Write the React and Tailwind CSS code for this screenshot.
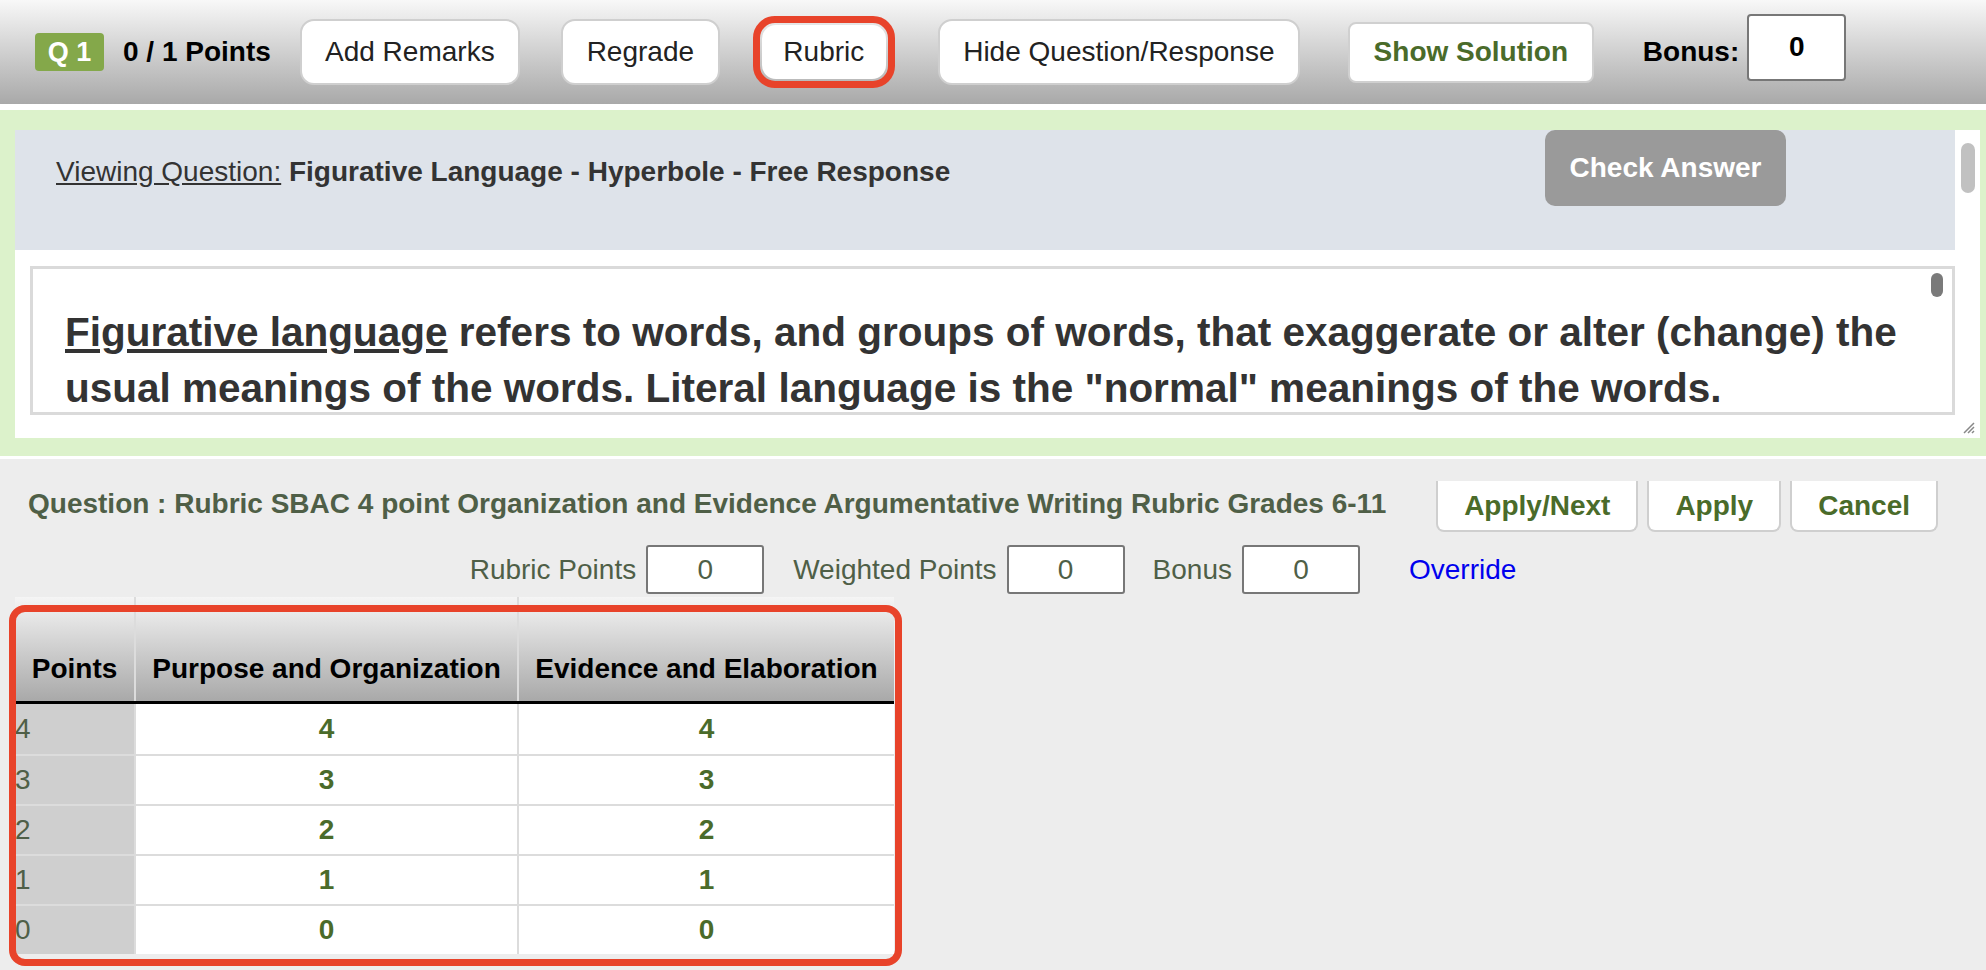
import React from "react";

const TopButton = ({ children, className = "" }) => (
  <button
    className={`h-[66px] bg-white border-2 border-[#cfcfcf] rounded-[14px] text-[28px] text-[#222] ${className}`}
  >
    {children}
  </button>
);

const rows = [4, 3, 2, 1, 0];

const App = () => {
  return (
    <div className="w-[1986px] h-[970px] overflow-hidden bg-[#ededed] font-['Liberation_Sans',Arial,sans-serif]">
      {/* top bar */}
      <div className="h-[104px] bg-gradient-to-b from-[#f8f8f8] to-[#a9a9a9] flex items-center pl-[35px]">
        <div className="w-[69px] h-[38px] bg-[#84a84a] rounded-[4px] flex items-center justify-center text-white font-bold text-[27px]">
          Q 1
        </div>
        <span className="ml-[19px] font-bold text-[28px] text-black">0 / 1 Points</span>
        <TopButton className="ml-[29px] w-[220px]">Add Remarks</TopButton>
        <TopButton className="ml-[41px] w-[159px]">Regrade</TopButton>
        <div className="ml-[33px] border-[7px] border-[#e8432a] rounded-[22px] p-[2px]">
          <button className="h-[54px] w-[124px] bg-white rounded-[14px] text-[28px] text-[#222]">
            Rubric
          </button>
        </div>
        <TopButton className="ml-[43px] w-[362px]">Hide Question/Response</TopButton>
        <button className="ml-[48px] w-[246px] h-[61px] bg-white border-2 border-[#d0d0d0] rounded-[8px] text-[28px] font-bold text-[#4a6b2a]">
          Show Solution
        </button>
        <span className="ml-[49px] font-bold text-[28px] text-black">Bonus:</span>
        <div className="ml-[8px] mb-[10px] w-[99px] h-[67px] bg-white border-2 border-[#777] rounded-[4px] flex items-center justify-center font-bold text-[28px] text-black">
          0
        </div>
      </div>

      <div className="h-[6px] bg-white" />

      {/* question area */}
      <div className="bg-[#dcf2cb] pt-[20px] pb-[18px] pl-[15px] pr-[6px]">
        <div className="h-[308px] bg-white flex">
          <div className="flex-1 flex flex-col">
            <div className="h-[120px] bg-[#dee3ea] flex justify-between items-start">
              <div className="pl-[41px] pt-[21px] text-[28px] text-[#333]">
                <span className="underline">Viewing Question:</span>{" "}
                <span className="font-bold">Figurative Language - Hyperbole - Free Response</span>
              </div>
              <button className="mr-[169px] w-[241px] h-[76px] bg-[#9a9a9a] rounded-[10px] text-white font-bold text-[28px]">
                Check Answer
              </button>
            </div>
            <div className="pt-[16px] pl-[15px]">
              <div className="relative h-[149px] border-[3px] border-[#dadada] overflow-hidden px-[32px] pt-[35px] text-[40.5px] leading-[56px] font-bold text-[#333]">
                <span className="underline">Figurative language</span> refers to words, and groups of words,
                that exaggerate or alter (change) the usual meanings of the words. Literal language is the
                "normal" meanings of the words.
                <div className="absolute right-[9px] top-[4px] w-[12px] h-[24px] rounded-full bg-[#7a7a7a]" />
              </div>
            </div>
          </div>
          <div className="w-[25px] flex flex-col items-center justify-between pt-[13px] pb-[4px]">
            <div className="w-[14px] h-[50px] rounded-full bg-[#c1c1c1]" />
            <svg width="14" height="14" viewBox="0 0 14 14">
              <path d="M13 3 L3 13 M13 7 L7 13 M13 11 L11 13" stroke="#888" strokeWidth="1.5" />
            </svg>
          </div>
        </div>
      </div>

      <div className="h-[3px] bg-white" />

      {/* rubric section */}
      <div className="flex items-center justify-between mt-[22px] pl-[28px] pr-[48px]">
        <span className="text-[28px] font-bold text-[#4f5f47] -mt-[6px]">
          Question : Rubric SBAC 4 point Organization and Evidence Argumentative Writing Rubric Grades 6-11
        </span>
        <div className="flex gap-[9px]">
          {["Apply/Next", "Apply", "Cancel"].map((b) => (
            <button
              key={b}
              className="h-[51px] px-[26px] bg-white border-2 border-t-0 border-[#cfcfcf] rounded-b-[8px] text-[28px] font-bold text-[#4a6b2a]"
            >
              {b}
            </button>
          ))}
        </div>
      </div>

      <div className="mt-[13px] flex items-center justify-center text-[28px] text-[#4f5f47]">
        <span>Rubric Points</span>
        <div className="ml-[10px] w-[118px] h-[49px] bg-white border-2 border-[#777] rounded-[3px] flex items-center justify-center">0</div>
        <span className="ml-[29px]">Weighted Points</span>
        <div className="ml-[10px] w-[118px] h-[49px] bg-white border-2 border-[#777] rounded-[3px] flex items-center justify-center">0</div>
        <span className="ml-[28px]">Bonus</span>
        <div className="ml-[10px] w-[118px] h-[49px] bg-white border-2 border-[#777] rounded-[3px] flex items-center justify-center">0</div>
        <span className="ml-[49px] text-[#0000ee]">Override</span>
      </div>

      <div className="relative mt-[3px] ml-[15px] w-[879px]">
        <div className="h-[107px] flex bg-gradient-to-b from-[#f5f5f5] to-[#a9a9a9] border-b-[3px] border-black text-[28px] font-bold text-black">
          <div className="w-[119px] flex items-end justify-center pb-[11px]">Points</div>
          <div className="w-[383px] flex items-end justify-center pb-[11px] border-l-2 border-[#dcdcdc]">
            Purpose and Organization
          </div>
          <div className="flex-1 flex items-end justify-center pb-[11px] border-l-2 border-[#dcdcdc]">
            Evidence and Elaboration
          </div>
        </div>
        {rows.map((n, i) => (
          <div key={n} className={`h-[50px] flex text-[28px] ${i > 0 ? "border-t-2 border-[#dcdcdc]" : ""}`}>
            <div className="w-[119px] bg-[#cfcfcf] flex items-center text-[#4f5f47]">{n}</div>
            <div className="w-[383px] bg-white flex items-center justify-center font-bold text-[#4a6b2a] border-l-2 border-[#dcdcdc]">
              {n}
            </div>
            <div className="flex-1 bg-white flex items-center justify-center font-bold text-[#4a6b2a] border-l-2 border-[#dcdcdc]">
              {n}
            </div>
          </div>
        ))}
        <div className="absolute left-[-6px] top-[8px] w-[893px] h-[361px] border-[7px] border-[#e8432a] rounded-[16px] pointer-events-none" />
      </div>
    </div>
  );
};

export default App;
